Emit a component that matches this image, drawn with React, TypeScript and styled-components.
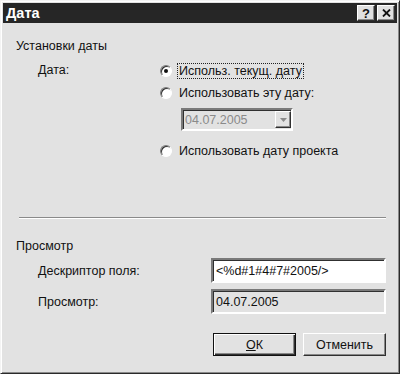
import React from "react";
import styled, { createGlobalStyle } from "styled-components";

const Global = createGlobalStyle`
  html, body { margin: 0; padding: 0; background: #e2e2e2; }
  body { font-family: "Liberation Sans", Arial, sans-serif; font-size: 12.5px; color: #111; }
`;

const Window = styled.div`
  box-sizing: border-box;
  width: 400px;
  height: 374px;
  background: #e2e2e2;
  border: 1px solid;
  border-color: #f4f4f4 #2a2a2a #2a2a2a #f4f4f4;
  box-shadow: inset 1px 1px 0 #fff, inset -1px -1px 0 #8a8a8a;
  padding: 2px;
  display: flex;
  flex-direction: column;
`;

const TitleBar = styled.div`
  height: 20px;
  background: #262626;
  display: flex;
  align-items: center;
  justify-content: space-between;
  padding: 0 2px 0 3px;
`;

const Title = styled.span`
  color: #fff;
  font-weight: bold;
  font-size: 14.5px;
`;

const TitleButtons = styled.div`
  display: flex;
  gap: 2px;
`;

const CaptionButton = styled.div`
  box-sizing: border-box;
  width: 18px;
  height: 16px;
  background: #e0e0e0;
  border: 1px solid;
  border-color: #fff #303030 #303030 #fff;
  box-shadow: inset -1px -1px 0 #888;
  display: flex;
  align-items: center;
  justify-content: center;
  font-weight: bold;
  font-size: 13px;
  color: #111;
`;

const Body = styled.div`
  flex: 1;
  display: flex;
  flex-direction: column;
  padding: 16px 11px 0 13px;
`;

const GroupLabel = styled.div`
  height: 14px;
  line-height: 14px;
`;

const DateGrid = styled.div`
  display: grid;
  grid-template-columns: 122px 1fr;
  margin-top: 9px;
  padding-left: 22px;
`;

const FieldLabel = styled.div`
  line-height: 16px;
`;

const Options = styled.div`
  display: flex;
  flex-direction: column;
`;

const RadioRow = styled.div<{ $gap?: number }>`
  display: flex;
  align-items: center;
  gap: 6px;
  height: 18px;
  margin-top: ${(p) => p.$gap ?? 0}px;
`;

const RadioCircle = styled.span<{ $checked?: boolean }>`
  box-sizing: border-box;
  width: 12px;
  height: 12px;
  border-radius: 50%;
  border: 1px solid;
  border-color: #7a7a7a #fff #fff #7a7a7a;
  background: #fff;
  box-shadow: inset 1px 1px 0 #303030;
  display: flex;
  align-items: center;
  justify-content: center;
  &::after {
    content: "";
    width: 4px;
    height: 4px;
    border-radius: 50%;
    background: ${(p) => (p.$checked ? "#111" : "transparent")};
  }
`;

const RadioText = styled.span<{ $focus?: boolean }>`
  padding: 0 1px;
  outline: ${(p) => (p.$focus ? "1px dotted #222" : "none")};
  line-height: 14px;
`;

const Combo = styled.div`
  box-sizing: border-box;
  margin: 6px 0 0 21px;
  width: 112px;
  height: 23px;
  border: 2px solid;
  border-color: #7a7a7a #fff #fff #7a7a7a;
  box-shadow: inset 1px 1px 0 #303030;
  background: #e2e2e2;
  display: flex;
  align-items: center;
  justify-content: space-between;
  padding-left: 2px;
  color: #8a8a8a;
`;

const ComboArrow = styled.div`
  box-sizing: border-box;
  width: 16px;
  height: 17px;
  border: 1px solid;
  border-color: #fff #303030 #303030 #fff;
  box-shadow: inset -1px -1px 0 #888;
  display: flex;
  align-items: center;
  justify-content: center;
`;

const Separator = styled.div`
  margin: 57px 0 0 3px;
  height: 0;
  border-top: 1px solid #8a8a8a;
  border-bottom: 1px solid #fff;
`;

const PreviewGroup = styled.div`
  margin-top: 20px;
`;

const PreviewGrid = styled.div`
  display: grid;
  grid-template-columns: 173px 175px;
  row-gap: 6px;
  margin-top: 5px;
  padding-left: 22px;
  align-items: center;
`;

const TextField = styled.div<{ $readOnly?: boolean }>`
  box-sizing: border-box;
  height: 25px;
  border: 2px solid;
  border-color: #7a7a7a #fff #fff #7a7a7a;
  box-shadow: inset 1px 1px 0 #303030;
  background: ${(p) => (p.$readOnly ? "#e2e2e2" : "#fff")};
  display: flex;
  align-items: center;
  padding-left: 3px;
  color: #111;
`;

const ButtonRow = styled.div`
  display: flex;
  justify-content: flex-end;
  gap: 7px;
  margin-top: 19px;
`;

const Button = styled.div<{ $default?: boolean }>`
  box-sizing: border-box;
  width: 83px;
  height: 23px;
  background: #e2e2e2;
  border: 1px solid;
  border-color: ${(p) => (p.$default ? "#111" : "#fff #303030 #303030 #fff")};
  box-shadow: ${(p) =>
    p.$default
      ? "inset 1px 1px 0 #fff, inset -1px -1px 0 #303030, inset -2px -2px 0 #888"
      : "inset -1px -1px 0 #888"};
  display: flex;
  align-items: center;
  justify-content: center;
`;

export default function App() {
  return (
    <>
      <Global />
      <Window>
        <TitleBar>
          <Title>Дата</Title>
          <TitleButtons>
            <CaptionButton>?</CaptionButton>
            <CaptionButton>
              <svg width="9" height="8" viewBox="0 0 9 8">
                <path d="M1 0.5 L8 7.5 M8 0.5 L1 7.5" stroke="#111" strokeWidth="1.8" />
              </svg>
            </CaptionButton>
          </TitleButtons>
        </TitleBar>
        <Body>
          <GroupLabel>Установки даты</GroupLabel>
          <DateGrid>
            <FieldLabel>Дата:</FieldLabel>
            <Options>
              <RadioRow>
                <RadioCircle $checked />
                <RadioText $focus>Использ. текущ. дату</RadioText>
              </RadioRow>
              <RadioRow $gap={4}>
                <RadioCircle />
                <RadioText>Использовать эту дату:</RadioText>
              </RadioRow>
              <Combo>
                <span>04.07.2005</span>
                <ComboArrow>
                  <svg width="7" height="4" viewBox="0 0 7 4">
                    <path d="M0 0 H7 L3.5 4 Z" fill="#8a8a8a" />
                  </svg>
                </ComboArrow>
              </Combo>
              <RadioRow $gap={11}>
                <RadioCircle />
                <RadioText>Использовать дату проекта</RadioText>
              </RadioRow>
            </Options>
          </DateGrid>
          <Separator />
          <PreviewGroup>
            <GroupLabel>Просмотр</GroupLabel>
            <PreviewGrid>
              <FieldLabel>Дескриптор поля:</FieldLabel>
              <TextField>&lt;%d#1#4#7#2005/&gt;</TextField>
              <FieldLabel>Просмотр:</FieldLabel>
              <TextField $readOnly>04.07.2005</TextField>
            </PreviewGrid>
          </PreviewGroup>
          <ButtonRow>
            <Button $default>
              <span>
                <u>О</u>К
              </span>
            </Button>
            <Button>Отменить</Button>
          </ButtonRow>
        </Body>
      </Window>
    </>
  );
}
